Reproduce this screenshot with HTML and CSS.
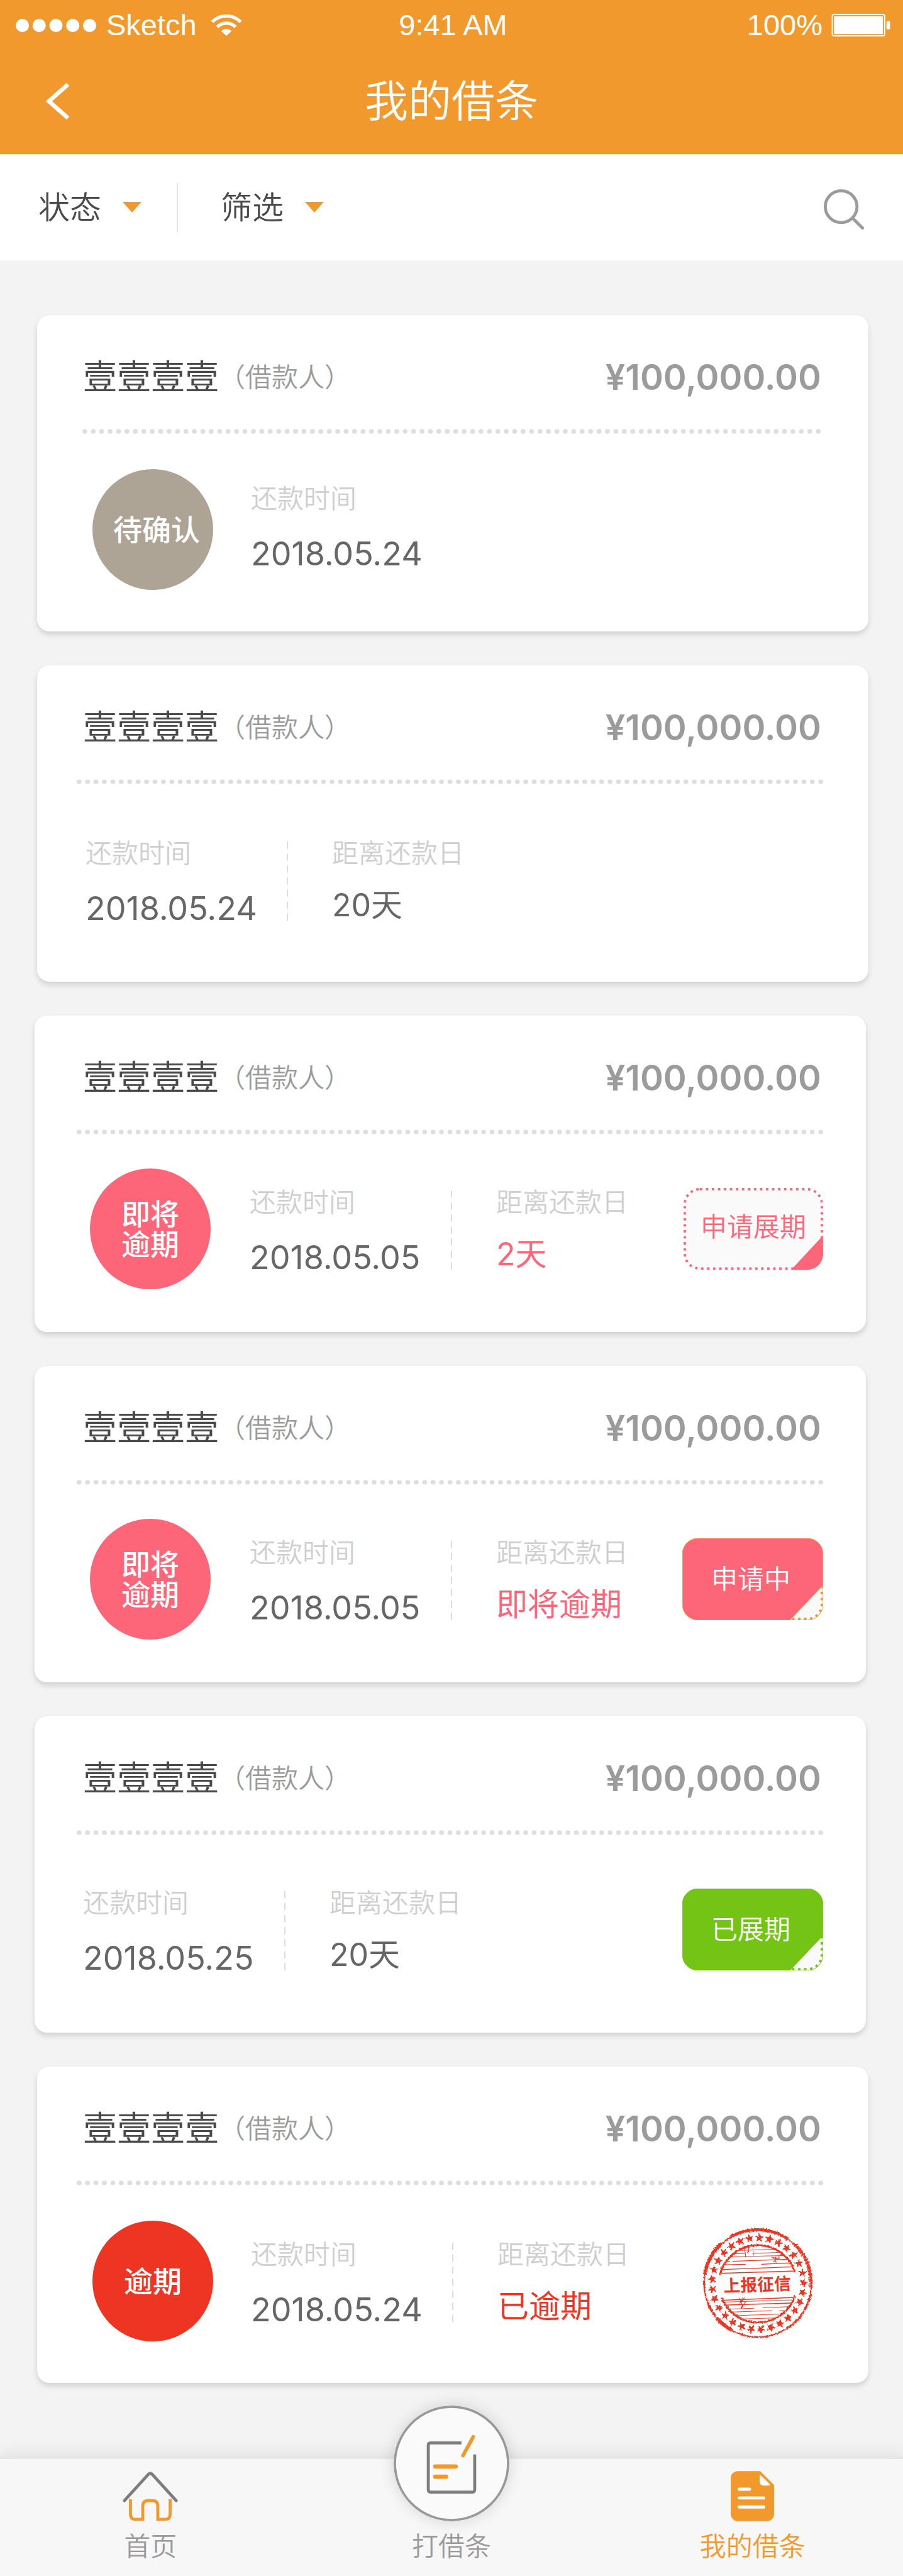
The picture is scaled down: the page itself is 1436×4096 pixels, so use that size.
FILE: index.html
```html
<!DOCTYPE html>
<html lang="zh-CN">
<head>
<meta charset="utf-8">
<meta name="viewport" content="width=device-width, initial-scale=1">
<title>我的借条</title>
<link rel="stylesheet" href="styles.css">
</head>
<body>
<svg class="defs" aria-hidden="true">
  <defs>
    <symbol id="dots" viewBox="0 0 1240 8">
      <path d="M4 4H1237" fill="none" stroke="#dedede" stroke-width="8" stroke-linecap="round" stroke-dasharray="0 14"/>
    </symbol>
    <symbol id="dashes" viewBox="0 0 2 132">
      <path d="M1 0V132" fill="none" stroke="#dcdcdc" stroke-width="2" stroke-dasharray="12 8"/>
    </symbol>
    <symbol id="ticket-open" viewBox="0 0 232 136">
      <rect x="2" y="2" width="228" height="132" rx="25" fill="#fafafa" stroke="currentColor" stroke-width="4" stroke-dasharray="4 6"/>
      <path d="M179 136L232 79V110A26 26 0 0 1 206 136Z" fill="currentColor"/>
    </symbol>
    <symbol id="ticket-full" viewBox="0 0 234 136">
      <path d="M26 0H208A26 26 0 0 1 234 26V78L179 136H26A26 26 0 0 1 0 110V26A26 26 0 0 1 26 0Z" fill="currentColor"/>
      <path d="M234 78L179 136H208A26 26 0 0 0 234 110Z" fill="#fafafa"/>
      <path class="ticket-edge" d="M232 79V110A24 24 0 0 1 208 134H182" fill="none" stroke-width="4" stroke-dasharray="4 6"/>
    </symbol>
  </defs>
</svg>

<header class="top">
  <div class="status">
    <div class="status-left">
      <svg class="signal" viewBox="0 0 134 22" aria-hidden="true"><g fill="#fff"><circle cx="11" cy="11" r="11"/><circle cx="39" cy="11" r="11"/><circle cx="67" cy="11" r="11"/><circle cx="95" cy="11" r="11"/><circle cx="123" cy="11" r="11"/></g></svg>
      <span>Sketch</span>
      <svg class="wifi" viewBox="0 0 52 36" aria-hidden="true"><g fill="none" stroke="#fff" stroke-width="5.5"><path d="M2 12.500A34 34 0 0 1 50 12.500"/><path d="M10.500 21A22 22 0 0 1 41.500 21"/></g><path d="M17.500 28A12 12 0 0 1 34.500 28L26 36Z" fill="#fff"/></svg>
    </div>
    <span>9:41 AM</span>
    <div class="status-right">
      <span>100%</span>
      <svg class="battery" viewBox="0 0 98 38" aria-hidden="true"><rect x="1" y="1" width="88" height="36" rx="3" fill="none" stroke="#fff" stroke-width="2"/><rect x="4" y="4" width="82" height="30" rx="1" fill="#fff"/><rect x="92" y="12" width="6" height="14" rx="2" fill="#fff"/></svg>
    </div>
  </div>
  <div class="title-bar">
    <button class="back" type="button" aria-label="返回"><svg viewBox="0 0 42 62" aria-hidden="true"><path d="M38 3L6 31L38 59" fill="none" stroke="#fff" stroke-width="7"/></svg></button>
    <h1>我的借条</h1>
  </div>
</header>

<form class="filters">
  <span class="filter"><select aria-label="状态"><option>状态</option></select></span>
  <span class="filter"><select aria-label="筛选"><option>筛选</option></select></span>
  <button class="search" type="button" aria-label="搜索"><svg viewBox="0 0 66 66" aria-hidden="true"><g fill="none" stroke="#9b9b9b" stroke-width="5"><circle cx="28.500" cy="28.500" r="26"/><path d="M48 48L63.500 63.500" stroke-linecap="round"/></g></svg></button>
</form>

<main class="list">
  <article class="card card--first">
    <div class="card-head"><h2>壹壹壹壹</h2><span class="role">（借款人）</span><strong class="amount">¥100,000.00</strong></div>
    <svg class="rule" viewBox="0 0 1226 8" aria-hidden="true"><path d="M4 4H1223" fill="none" stroke="#dedede" stroke-width="8" stroke-linecap="round" stroke-dasharray="0 14"/></svg>
    <div class="card-body">
      <span class="badge badge--pending">待确认</span>
      <dl class="facts facts--single">
        <div class="fact fact--date"><dt>还款时间</dt><dd>2018.05.24</dd></div>
      </dl>
    </div>
  </article>

  <article class="card">
    <div class="card-head"><h2>壹壹壹壹</h2><span class="role">（借款人）</span><strong class="amount">¥100,000.00</strong></div>
    <svg class="rule" viewBox="0 0 1240 8" aria-hidden="true"><use href="#dots"/></svg>
    <div class="card-body card-body--plain">
      <dl class="facts">
        <div class="fact fact--date"><dt>还款时间</dt><dd>2018.05.24</dd></div>
        <div class="split"><svg viewBox="0 0 2 132" aria-hidden="true"><use href="#dashes"/></svg></div>
        <div class="fact fact--left"><dt>距离还款日</dt><dd>20天</dd></div>
      </dl>
    </div>
  </article>

  <article class="card card--offset">
    <div class="card-head"><h2>壹壹壹壹</h2><span class="role">（借款人）</span><strong class="amount">¥100,000.00</strong></div>
    <svg class="rule" viewBox="0 0 1240 8" aria-hidden="true"><use href="#dots"/></svg>
    <div class="card-body">
      <span class="badge badge--soon">即将<br>逾期</span>
      <dl class="facts">
        <div class="fact fact--date"><dt>还款时间</dt><dd>2018.05.05</dd></div>
        <div class="split"><svg viewBox="0 0 2 132" aria-hidden="true"><use href="#dashes"/></svg></div>
        <div class="fact fact--left fact--soon"><dt>距离还款日</dt><dd>2天</dd></div>
      </dl>
      <button class="ticket ticket--open" type="button"><svg viewBox="0 0 232 136" aria-hidden="true"><use href="#ticket-open"/></svg><span>申请展期</span></button>
    </div>
  </article>

  <article class="card card--offset">
    <div class="card-head"><h2>壹壹壹壹</h2><span class="role">（借款人）</span><strong class="amount">¥100,000.00</strong></div>
    <svg class="rule" viewBox="0 0 1240 8" aria-hidden="true"><use href="#dots"/></svg>
    <div class="card-body">
      <span class="badge badge--soon">即将<br>逾期</span>
      <dl class="facts">
        <div class="fact fact--date"><dt>还款时间</dt><dd>2018.05.05</dd></div>
        <div class="split"><svg viewBox="0 0 2 132" aria-hidden="true"><use href="#dashes"/></svg></div>
        <div class="fact fact--left fact--soon"><dt>距离还款日</dt><dd>即将逾期</dd></div>
      </dl>
      <button class="ticket ticket--busy" type="button"><svg viewBox="0 0 234 136" aria-hidden="true"><use href="#ticket-full"/></svg><span>申请中</span></button>
    </div>
  </article>

  <article class="card card--offset">
    <div class="card-head"><h2>壹壹壹壹</h2><span class="role">（借款人）</span><strong class="amount">¥100,000.00</strong></div>
    <svg class="rule" viewBox="0 0 1240 8" aria-hidden="true"><use href="#dots"/></svg>
    <div class="card-body card-body--plain">
      <dl class="facts">
        <div class="fact fact--date"><dt>还款时间</dt><dd>2018.05.25</dd></div>
        <div class="split"><svg viewBox="0 0 2 132" aria-hidden="true"><use href="#dashes"/></svg></div>
        <div class="fact fact--left"><dt>距离还款日</dt><dd>20天</dd></div>
      </dl>
      <button class="ticket ticket--done" type="button"><svg viewBox="0 0 234 136" aria-hidden="true"><use href="#ticket-full"/></svg><span>已展期</span></button>
    </div>
  </article>

  <article class="card">
    <div class="card-head"><h2>壹壹壹壹</h2><span class="role">（借款人）</span><strong class="amount">¥100,000.00</strong></div>
    <svg class="rule" viewBox="0 0 1240 8" aria-hidden="true"><use href="#dots"/></svg>
    <div class="card-body">
      <span class="badge badge--late">逾期</span>
      <dl class="facts">
        <div class="fact fact--date"><dt>还款时间</dt><dd>2018.05.24</dd></div>
        <div class="split"><svg viewBox="0 0 2 132" aria-hidden="true"><use href="#dashes"/></svg></div>
        <div class="fact fact--left fact--late"><dt>距离还款日</dt><dd>已逾期</dd></div>
      </dl>
      <svg class="stamp" viewBox="-94 -94 188 188" role="img" aria-label="上报征信">
        <defs>
          <filter id="rough" x="-10%" y="-10%" width="120%" height="120%">
            <feTurbulence type="fractalNoise" baseFrequency="0.35" numOctaves="2" seed="4" result="n"/>
            <feDisplacementMap in="SourceGraphic" in2="n" scale="4" xChannelSelector="R" yChannelSelector="G"/>
          </filter>
          <path id="star" d="M0 -84L2 -78.700L7.600 -78.500L3.200 -75L4.700 -69.500L0 -72.600L-4.700 -69.500L-3.200 -75L-7.600 -78.500L-2 -78.700Z"/>
          <g id="stars"><use href="#star"/><use href="#star" transform="rotate(12.414)"/><use href="#star" transform="rotate(24.828)"/><use href="#star" transform="rotate(37.241)"/><use href="#star" transform="rotate(49.655)"/><use href="#star" transform="rotate(62.069)"/><use href="#star" transform="rotate(74.483)"/></g>
          <clipPath id="disc"><circle r="63"/></clipPath>
        </defs>
        <g filter="url(#rough)" fill="#ee3524" stroke="#ee3524">
          <g fill="none">
            <circle r="89" stroke-width="2.500"/>
            <path d="M-46 -77A90 90 0 0 1 50 -74" stroke-width="5"/>
            <path d="M-10 -89A90 90 0 0 1 20 -87" stroke-width="5"/>
            <path d="M-88 -15A90 90 0 0 1 -60 -67" stroke-width="6"/>
            <path d="M-68 57A90 90 0 0 0 -44 77" stroke-width="6"/>
            <path d="M-83 32A90 90 0 0 0 -72 52" stroke-width="4"/>
            <path d="M62 -65A90 90 0 0 1 88 6" stroke-width="6" stroke-dasharray="3 1 5 1"/>
            <path d="M88 18A90 90 0 0 1 48 75" stroke-width="4" stroke-dasharray="4 1 2 1"/>
            <path d="M-63 -14A65 65 0 0 1 62 -19" stroke-width="3.500"/>
            <path d="M-60 24A65 65 0 0 0 62 20" stroke-width="3.500"/>
          </g>
          <g stroke="none" transform="rotate(2)"><use href="#stars"/><use href="#stars" transform="rotate(86.897)"/><use href="#stars" transform="rotate(173.793)"/><use href="#stars" transform="rotate(260.690)"/><use href="#star" transform="rotate(347.586)"/></g>
        </g>
        <g clip-path="url(#disc)" fill="none" stroke="#ee3524" stroke-width="1">
          <path d="M-64 -54L64 -58M-64 -49L-22 -50M-8 -50L64 -53M-64 -44L64 -47"/>
          <path d="M-64 -37L-46 -37M-42 -37L64 -41M-64 -31L-20 -32M6 -32L64 -35M-64 -23L64 -28" stroke-width="1.300"/>
          <path d="M-64 -17L64 -21" stroke-width="1.600"/>
          <path d="M-64 28L64 23M-64 36L64 32" stroke-width="1.600"/>
          <path d="M-64 31L64 27M-64 43L-6 41M8 40L64 38M-64 48L24 45M36 45L64 44M-64 54L64 50M-64 60L64 56"/>
        </g>
        <g fill="none" stroke="#ee3524" stroke-width="1.300" filter="url(#rough)"><path d="M-22 -60L-20 -44M-14 -62L-17 -50M-8 -58L-7 -46M24 -44L34 -40M30 -46V-34M36 -44L26 -36M-30 24L-24 40M-22 22L-32 36M-20 30L-28 42"/></g>
        <text x="-1" y="12" text-anchor="middle" transform="rotate(-2)" class="stamp-text">上报征信</text>
      </svg>
    </div>
  </article>
</main>

<nav class="tabs">
  <a class="tab" href="#home">
    <svg class="tab-home" viewBox="0 0 92 82" aria-hidden="true"><path d="M3 48.500L42.500 5Q46 1.500 49.500 5L89 48.500" fill="none" stroke="#7d7d7d" stroke-width="5" stroke-linecap="round"/><path d="M13 46V71Q13 79.500 21 79.500H33.500V58Q33.500 48.500 42 48.500H50Q58.500 48.500 58.500 58V79.500H71Q79 79.500 79 71V46" fill="none" stroke="#f2992e" stroke-width="5"/></svg>
    <span>首页</span>
  </a>
  <a class="tab" href="#new">
    <svg class="tab-new" viewBox="0 0 192 192" aria-hidden="true"><circle cx="96" cy="96" r="94" fill="#fafafa" stroke="#999" stroke-width="4"/><g fill="none" stroke="#7d7d7d" stroke-width="5"><path d="M112.500 62H61Q57.500 62 57.500 66V139Q57.500 143.500 61 143.500H131Q134.500 143.500 134.500 139V81"/></g><g fill="none" stroke="#f2992e" stroke-linecap="round"><path d="M132 52L115 83" stroke-width="6"/><path d="M69 101H103M69 118H87" stroke-width="7"/></g></svg>
    <span>打借条</span>
  </a>
  <a class="tab tab--active" href="#mine" aria-current="page">
    <svg class="tab-mine" viewBox="0 0 72 83" aria-hidden="true"><path d="M12 0H49L72 23V71A12 12 0 0 1 60 83H12A12 12 0 0 1 0 71V12A12 12 0 0 1 12 0Z" fill="#f2992e"/><path d="M48 9Q48 5 51 8L64 21Q66 24 62 24H55Q48 24 48 17Z" fill="#fff"/><path d="M14 30H31.500M14 44.500H55M14 59.500H55" stroke="#fff" stroke-width="5" stroke-linecap="round"/></svg>
    <span>我的借条</span>
  </a>
</nav>
</body>
</html>
```

FILE: styles.css
```css
* {
  box-sizing: border-box;
}

body {
  margin: 0;
  background: #f3f3f3;
  color: #4a4a4a;
  font-family: Inter, "Noto Sans CJK SC", sans-serif;
  font-weight: 350;
}

h1, h2, dl, dd {
  margin: 0;
  font-weight: inherit;
}

svg {
  display: block;
  flex: none;
}

button, select {
  margin: 0;
  padding: 0;
  border: 0;
  background: none;
  color: inherit;
  font: inherit;
}

.defs {
  position: absolute;
  width: 0;
  height: 0;
}

/* Header */

.top {
  padding-bottom: 34px;
  background: #f2992e;
  color: #fff;
}

.status {
  display: grid;
  grid-template-columns: 1fr auto 1fr;
  align-items: center;
  height: 80px;
  padding: 0 20px 0 25px;
  font: 400 47px/50px "Liberation Sans", Arial, sans-serif;
}

.status-left, .status-right {
  display: flex;
  align-items: center;
}

.status-left {
  gap: 16px;
}

.status-right {
  justify-content: flex-end;
  gap: 14px;
}

.signal {
  width: 128px;
  height: 21px;
}

.wifi {
  width: 50px;
  height: 34px;
  margin-left: 6px;
}

.battery {
  width: 94px;
  height: 36px;
}

.title-bar {
  display: grid;
  grid-template-columns: 1fr auto 1fr;
  align-items: center;
  padding: 31px 72px 0;
}

.title-bar h1 {
  font-size: 69px;
  line-height: 100px;
}

.back {
  justify-self: start;
}

.back svg {
  width: 40px;
  height: 60px;
}

/* Filters */

.filters {
  display: flex;
  align-items: center;
  height: 169px;
  padding: 0 62px 0 61px;
  background: #fff;
  font-size: 50px;
  line-height: 78px;
}

.filter {
  display: flex;
  align-items: center;
  gap: 34px;
}

.filter + .filter {
  margin-left: 56px;
  padding-left: 68px;
  border-left: 2px solid #e6e6e6;
}

.filter::after {
  content: "";
  border: solid transparent;
  border-width: 17px 15px 0;
  border-top-color: #f2992e;
}

.filter select {
  width: 100px;
  height: 78px;
  appearance: none;
}

.search {
  margin-left: auto;
  padding-top: 6px;
}

.search svg {
  width: 64px;
  height: 64px;
}

/* Cards */

.list {
  display: flex;
  flex-direction: column;
  gap: 54px;
  padding: 87px 55px 117px 59px;
}

.card {
  border-radius: 20px;
  background: #fff;
  box-shadow: 0 5px 8px rgba(0, 0, 0, 0.14);
}

.card--offset {
  margin: 0 4px 0 -4px;
}

.card-head {
  display: flex;
  align-items: center;
  padding: 69px 75px 52px 73px;
  line-height: 60px;
}

.card--offset .card-head {
  padding-right: 71px;
  padding-left: 77px;
}

.card-head h2 {
  font-size: 54px;
  font-weight: 400;
}

.role {
  color: #9b9b9b;
  font-size: 42px;
}

.amount {
  margin-left: auto;
  color: #9b9b9b;
  font-size: 56px;
  font-weight: 600;
}

.rule {
  width: calc(100% - 135px);
  height: 8px;
  margin-left: 63px;
}

.card--offset .rule {
  margin-left: 67px;
}

.card--first .rule {
  width: calc(100% - 148px);
  margin-left: 72px;
}

.card-body {
  display: flex;
  align-items: center;
  min-height: 314px;
  padding: 56px 74px 66px 88px;
}

.card-body--plain {
  padding-left: 77px;
}

.card--offset .card-body {
  padding-top: 54px;
  padding-right: 68px;
  padding-bottom: 68px;
}

.badge {
  display: flex;
  flex: none;
  align-items: center;
  justify-content: center;
  width: 192px;
  height: 192px;
  margin-right: 60px;
  border-radius: 50%;
  color: #fff;
  font-size: 46px;
  font-weight: 500;
  line-height: 48px;
}

.badge--pending {
  padding-left: 12px;
  background: #aea496;
}

.badge--soon {
  margin-right: 62px;
  background: #fd6679;
}

.badge--late {
  background: #ee3524;
}

.facts {
  display: flex;
  align-items: center;
  padding-top: 4px;
}

.facts--single {
  padding-top: 0;
  padding-bottom: 10px;
}

.fact {
  line-height: 50px;
}

.fact--date {
  width: 320px;
}

.fact dt {
  margin-bottom: 38px;
  color: #cfcfcf;
  font-size: 42px;
}

.fact dd {
  color: #666;
  font-size: 50px;
  font-weight: 400;
}

.fact--date dd {
  font-size: 52px;
}

.fact--left {
  align-self: flex-start;
}

.fact--left dt {
  margin-bottom: 32px;
}

.fact--soon dd {
  color: #fd6679;
}

.fact--late dd {
  color: #ee3524;
}

.split {
  margin-right: 70px;
}

.split svg {
  width: 2px;
  height: 126px;
}

.ticket {
  display: grid;
  place-items: center;
  margin-left: auto;
  font-size: 42px;
  line-height: 50px;
}

.ticket > * {
  grid-area: 1 / 1;
}

.ticket svg {
  width: 224px;
  height: 130px;
}

.ticket span {
  padding-right: 6px;
  color: #fff;
}

.ticket--open {
  color: #fd6679;
}

.ticket--open svg {
  width: 222px;
}

.ticket--open span {
  padding: 0 0 6px;
  color: inherit;
}

.ticket--busy {
  color: #fd6679;
  stroke: #f2992e;
}

.ticket--done {
  color: #73c415;
  stroke: #73c415;
}

.ticket svg path:not(.ticket-edge) {
  stroke: none;
}

.stamp {
  width: 180px;
  height: 180px;
  margin-top: 8px;
  margin-right: 12px;
  margin-left: auto;
}

.stamp-text {
  fill: #ee3524;
  font-size: 28px;
  font-weight: 700;
}

/* Bottom tabs */

.tabs {
  display: grid;
  grid-template-columns: repeat(3, 1fr);
  border-top: 4px solid #e6e6e6;
  background: #f7f7f7;
  box-shadow: 0 -4px 24px rgba(0, 0, 0, 0.08);
}

.tab {
  display: flex;
  flex-direction: column;
  align-items: center;
  gap: 15px;
  padding: 19px 0 22px;
  color: #9b9b9b;
  font-size: 42px;
  line-height: 50px;
  text-decoration: none;
}

.tab--active {
  color: #f2992e;
}

.tab-home {
  width: 88px;
  height: 80px;
}

.tab-new {
  width: 184px;
  height: 184px;
  margin-top: -104px;
  border-radius: 50%;
  box-shadow: 0 0 24px rgba(0, 0, 0, 0.14);
}

.tab-mine {
  width: 69px;
  height: 80px;
}
```
